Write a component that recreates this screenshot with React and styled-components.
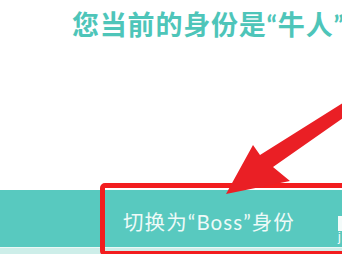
import React from "react";
import styled, { createGlobalStyle } from "styled-components";

const Global = createGlobalStyle`
  html, body { margin: 0; padding: 0; background: #ffffff; }
  body { font-family: "Lato", "Noto Sans CJK SC", sans-serif; }
`;

const Page = styled.div`
  position: relative;
  width: 342px;
  height: 254px;
  overflow: hidden;
  display: flex;
  flex-direction: column;
  background: #ffffff;
`;

const Header = styled.div`
  height: 50px;
  padding-left: 72px;
  display: flex;
  align-items: center;
  white-space: nowrap;
`;

const Title = styled.h1`
  margin: 0;
  font-family: "Lato", "Noto Sans CJK SC", sans-serif;
  font-size: 27px;
  font-weight: 700;
  letter-spacing: 0.8px;
  line-height: 50px;
  color: #4ec5b9;
`;

const Bar = styled.div`
  margin-top: auto;
  height: 57px;
  background: #58c9bf;
  display: flex;
  align-items: center;
  padding-left: 123px;
`;

const BarLabel = styled.span`
  font-family: "Lato", "Noto Sans CJK SC", sans-serif;
  font-size: 20.5px;
  letter-spacing: 1.1px;
  color: #eefaf8;
  white-space: nowrap;
  margin-top: 4px;
`;

const Footer = styled.div`
  height: 6px;
  border-top: 1px solid #eaf8f6;
  background: #cdeee9;
`;

const Highlight = styled.div`
  position: absolute;
  left: 100px;
  top: 183px;
  width: 260px;
  height: 73px;
  box-sizing: border-box;
  border: 5px solid #f21d1f;
  border-radius: 5px;
  pointer-events: none;
`;

const Arrow = styled.svg`
  position: absolute;
  left: 0;
  top: 0;
  width: 342px;
  height: 254px;
  pointer-events: none;
`;

const Watermark = styled.div`
  position: absolute;
  left: 338px;
  top: 216px;
  display: flex;
  flex-direction: column;
  color: #ffffff;
  font-family: "Liberation Sans", sans-serif;
  font-size: 12px;
  line-height: 13px;
`;

const Mark = styled.span`
  display: block;
  width: 6px;
  height: 15px;
  background: #f3fbfa;
`;

export default function App() {
  return (
    <>
      <Global />
      <Page>
        <Header>
          <Title>您当前的身份是“牛人”</Title>
        </Header>
        <Bar>
          <BarLabel>切换为“Boss”身份</BarLabel>
        </Bar>
        <Footer />
        <Watermark>
          <Mark />
          <span>j</span>
        </Watermark>
        <Highlight />
        <Arrow viewBox="0 0 342 254">
          <polygon
            points="346,101 260,155 253,145 226,194 290,181 273,167 346,116"
            fill="#ea1f25"
          />
        </Arrow>
      </Page>
    </>
  );
}
